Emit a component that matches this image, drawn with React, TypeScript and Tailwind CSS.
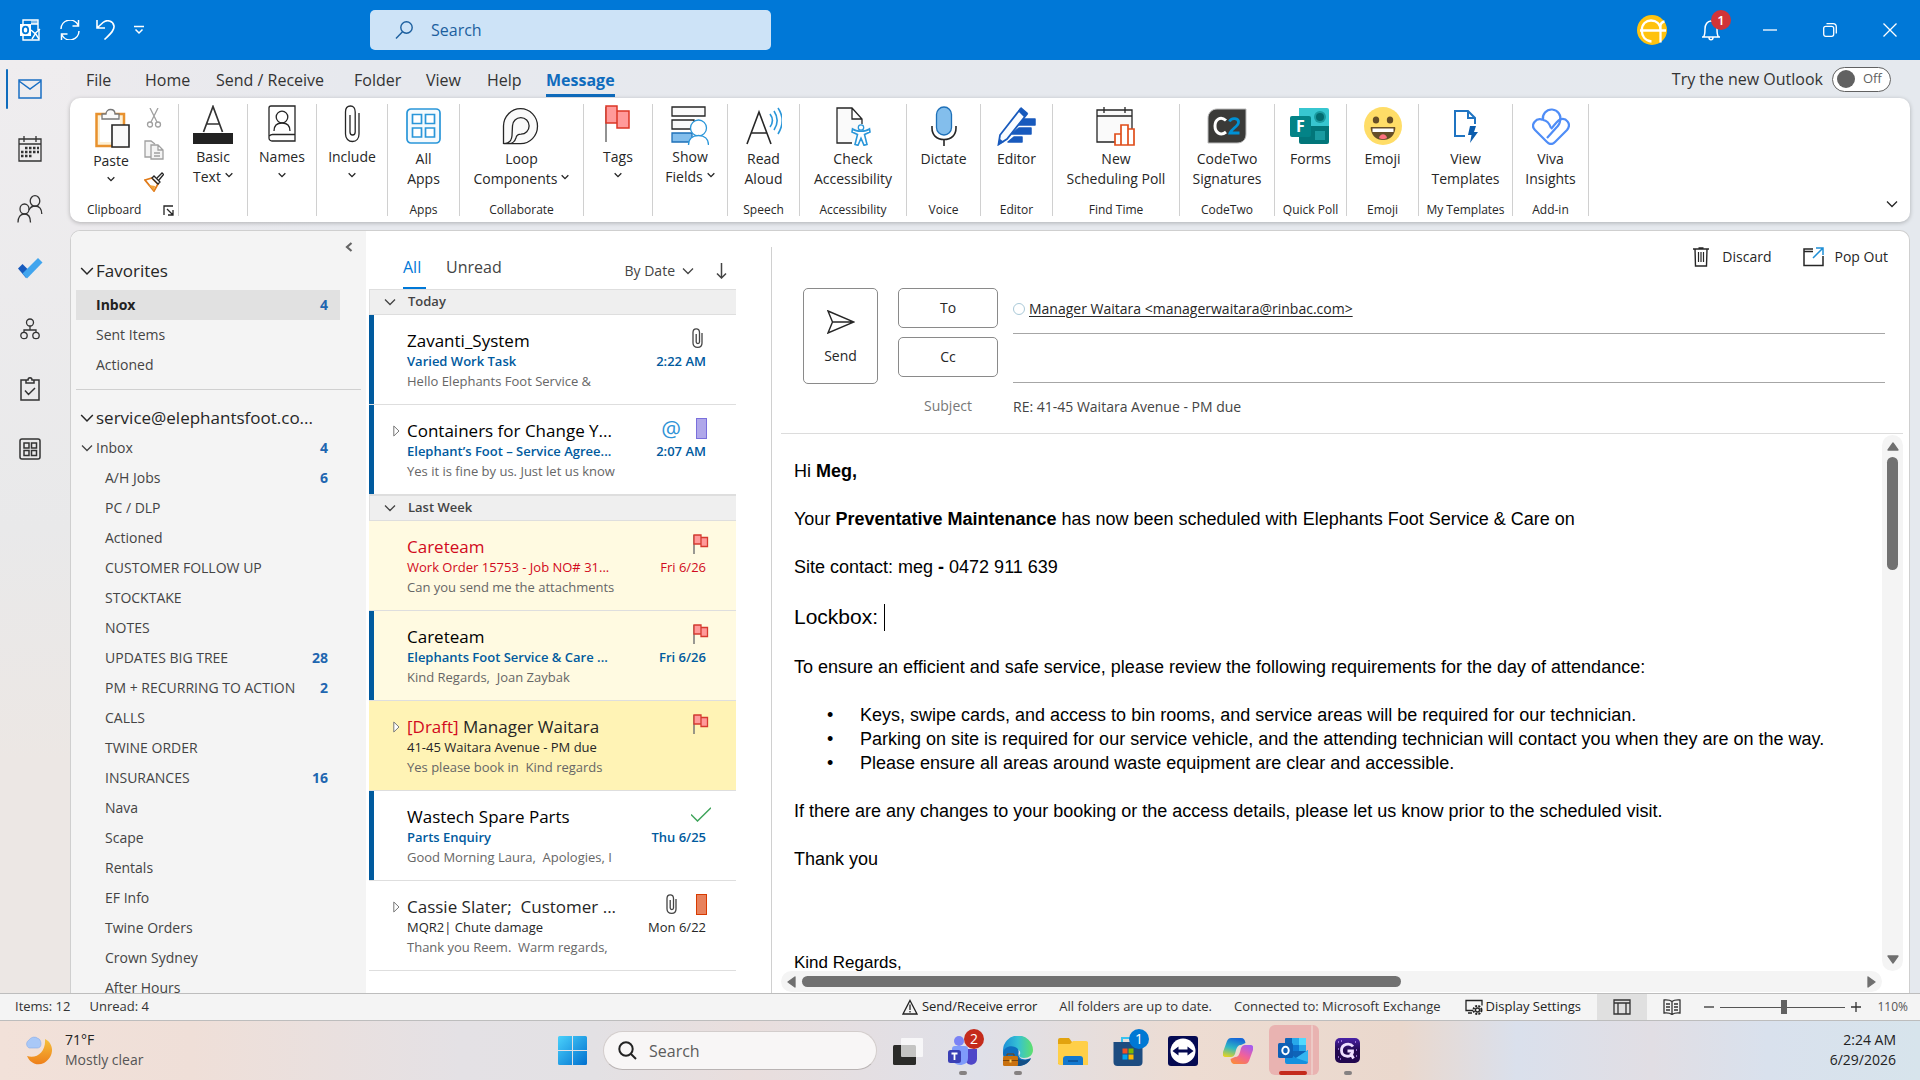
import React from 'react';

type P = { children?: React.ReactNode };

function Svg({ w = 24, h = 24, vb, cls = '', children, sw = 1.3 }: P & { w?: number; h?: number; vb?: string; cls?: string; sw?: number }) {
  return (
    <svg width={w} height={h} viewBox={vb ?? `0 0 ${w} ${h}`} fill="none" stroke="currentColor" strokeWidth={sw} className={'shrink-0 ' + cls} aria-hidden="true">
      {children}
    </svg>
  );
}

const Chevron = ({ s = 8, cls = '' }: { s?: number; cls?: string }) => (
  <Svg w={s} h={s} vb="0 0 12 12" sw={s > 8 ? 1.3 : 2} cls={cls}>
    <path d="M1 3.5l5 5 5-5" />
  </Svg>
);

/* ---------- Title bar ---------- */

function TitleBar() {
  return (
    <header className="flex h-[60px] shrink-0 items-center bg-[#0078d7] text-white">
      <div className="flex w-[370px] shrink-0 items-center pl-[19px]">
        <Svg w={22} h={22} sw={1.4}>
          <path d="M4 5V1h15v10M4 17v4h16V10" />
          <path d="M1 5h11v12H1z" fill="#fff" stroke="none" />
          <ellipse cx="6.500" cy="11" rx="2.700" ry="3.400" stroke="#0078d7" strokeWidth="1.800" />
          <path d="M12 11l4 3.500 5-4.500M13 20l3.500-5.500L20 20M12 5h7" />
          <path d="M12 1.500h7V5h-7z" fill="#fff" fillOpacity=".5" stroke="none" />
        </Svg>
        <button aria-label="Send and receive all" className="ml-[19px]">
          <Svg w={20} h={20} sw={1.5}>
            <path d="M1 9a9 9 0 0 1 17-4M19 11a9 9 0 0 1-17 4M18.500 0v6h-6M1.500 20v-6h6" />
          </Svg>
        </button>
        <button aria-label="Undo" className="ml-4">
          <Svg w={20} h={20} sw={1.6}>
            <path d="M1 0v8h8M1 8l6-5.500C11-1 17 1 18 6c.6 5-5 9-9.500 13.500" />
          </Svg>
        </button>
        <button aria-label="Customize Quick Access Toolbar" className="ml-[18px]">
          <Svg w={10} h={10} sw={1.5}>
            <path d="M0 1.500h10M1.500 4.500L5 8l3.500-3.500" />
          </Svg>
        </button>
      </div>
      <label className="flex h-10 w-[401px] items-center rounded-[5px] bg-[#cde3f7] pl-[25px] text-[#1c5f9e]">
        <Svg w={18} h={18} sw={1.4}>
          <circle cx="11.500" cy="6.500" r="5.700" />
          <path d="M7.500 10.700L1 17.500" />
        </Svg>
        <input type="search" aria-label="Search" placeholder="Search" className="ml-[18px] min-w-0 flex-1 bg-transparent text-base outline-none placeholder:text-[#1c5f9e]" />
      </label>
      <div className="ml-auto flex items-center">
        <button aria-label="Account">
          <svg width="30" height="30" viewBox="0 0 30 30">
            <circle cx="15" cy="15" r="15" fill="#ffc20e" />
            <path d="M3 15.500h26M14.500 26.500C8 26 4.800 21 4.800 15.500 4.800 9 9 5.500 14 5.500s9.500 3 9.500 10v12M23.500 15V11c0-3 1.500-4 4-4.500" fill="none" stroke="#fff" strokeWidth="2.300" />
          </svg>
        </button>
        <button aria-label="Notifications, 1 new" className="relative ml-[34px]">
          <Svg w={20} h={22} sw={1.5}>
            <path d="M1 18h18M2.500 18c1.500-2 1.500-4 1.500-8 0-4.500 2.500-8 6-8s6 3.500 6 8c0 4 0 6 1.500 8M8 18.500c0 3 4 3 4 0" />
          </Svg>
          <span className="absolute -top-[9px] left-[10px] flex h-5 w-5 items-center justify-center rounded-full bg-[#d13438] text-[13px] font-semibold leading-none">1</span>
        </button>
        <div className="flex pl-[19px]">
          <button aria-label="Minimize" className="flex w-[60px] justify-center"><Svg w={14} h={14}><path d="M0 7h14" /></Svg></button>
          <button aria-label="Restore" className="flex w-[60px] justify-center"><Svg w={14} h={14}><rect x="0.700" y="3.300" width="10" height="10" rx="2" /><path d="M3.500.7H10c2 0 3.300 1.300 3.300 3.300v6.500" /></Svg></button>
          <button aria-label="Close" className="flex w-[60px] justify-center"><Svg w={14} h={14}><path d="M.5.5l13 13M13.500.5l-13 13" /></Svg></button>
        </div>
      </div>
    </header>
  );
}

/* ---------- Left rail ---------- */

const rail: { name: string; icon: React.ReactNode }[] = [
  { name: 'Mail', icon: <Svg w={24} h={22} cls="text-[#1a6fc4]" sw={1.5}><path d="M1 2h22v18H1zM1 3l11 8L23 3" /></Svg> },
  {
    name: 'Calendar',
    icon: (
      <Svg w={24} h={28}>
        <path d="M1 4h22v22H1zM1 9h22M6 1v6M18 1v6" />
        <path d="M7 13h2.500M11 13h2.500M15 13h2.500M19 13h2M3 17h2.500M7 17h2.500M11 17h2.500M15 17h2.500M19 17h2M3 21h2.500M7 21h2.500M11 21h2.500" strokeWidth="2.500" />
      </Svg>
    ),
  },
  {
    name: 'People',
    icon: <Svg w={26} h={28}><ellipse cx="7.500" cy="14" rx="4.500" ry="5" /><path d="M1 27.500c0-5.500 2.500-8.500 6.500-8.500s6 3 6 8.500" /><ellipse cx="18" cy="6" rx="4.800" ry="5.300" /><path d="M12 15c1.300-2.700 3.300-4 6-4 4.500 0 6.800 3 6.800 8" /></Svg>,
  },
  {
    name: 'To Do',
    icon: <Svg w={26} h={22}><path d="M1 10.500L5.500 6l8 8-4.500 6z" fill="#185abd" stroke="none" /><path d="M5.500 15.500L21 0l4.500 4.500L10 20.500z" fill="#41a5ee" stroke="none" /></Svg>,
  },
  {
    name: 'Org Explorer',
    icon: <Svg w={20} h={22}><circle cx="10" cy="4.500" r="3.500" /><path d="M10 8v4M4 15v-3h12v3" /><circle cx="4" cy="17.500" r="3.200" /><circle cx="16" cy="17.500" r="3.200" /></Svg>,
  },
  {
    name: 'Tasks',
    icon: <Svg w={20} h={24} sw={1.5}><path d="M6 3H1v20h18V3h-5M6 6V3h2c0-3 4-3 4 0h2v3zM5 13.500l3.500 4L15 11" /></Svg>,
  },
  {
    name: 'More apps',
    icon: <Svg w={22} h={22} sw={1.5}><rect x="1" y="1" width="20" height="20" rx="2" /><path d="M5 5h5v5H5zM12.500 5h5v5h-5zM5 12.500h5v5H5zM12.500 12.500h5v5h-5z" /></Svg>,
  },
];

function Rail() {
  return (
    <nav aria-label="Apps" className="-mt-px flex w-[70px] shrink-0 flex-col text-[#333]">
      {rail.map((r, i) => (
        <button key={r.name} aria-label={r.name} className="flex h-[60px] w-full items-center">
          <span className={i === 0 ? 'ml-1.5 h-10 w-[2px] rounded bg-[#0f6cbd]' : 'ml-1.5 h-10 w-[2px]'} />
          <span className="flex w-[43px] justify-center">{r.icon}</span>
        </button>
      ))}
    </nav>
  );
}

/* ---------- Ribbon ---------- */

const icons: Record<string, React.ReactNode> = {
  basic: <Svg w={40} h={40}><path d="M10.500 27L20 1.500 29.500 27M13.500 19h13" stroke="#333" strokeWidth="1.700" /><path d="M0 28h40v11H0z" fill="#222" stroke="none" /></Svg>,
  names: <Svg w={28} h={38}><path d="M3 1h24v35H4a3 3 0 0 1-3-3V3a2 2 0 0 1 2-2zM1.500 31c1-1.500 2-1.500 3-1.500H27" /><circle cx="14" cy="12" r="5.800" /><path d="M6 26c0-5 3-8 8-8s8 3 8 8" /></Svg>,
  include: <Svg w={16} h={38}><path d="M15 8v21c0 4.500-2.500 7.500-6.500 7.500S1.500 33.500 1.500 29V7c0-3.700 2-6 5-6s4.700 2.300 4.700 6v20c0 2-1 3-2.600 3S6 29 6 27V10" /></Svg>,
  all: <Svg w={36} h={38} cls="text-[#2a96d9]" sw={1.7}><rect x="1" y="2" width="33" height="34" rx="4" fill="#f5fafd" /><path d="M6.500 7.500h9v9h-9zM19.500 7.500h9v9h-9zM6.500 21h9v9h-9zM19.500 21h9v9h-9z" fill="#fff" /></Svg>,
  loop: <Svg w={38} h={38}><path d="M1.500 37V19a17 17.500 0 1 1 17 17.700H1.500c5 0 8-3 8.500-8l.5-10a8.300 8.300 0 1 1 8.500 8.500c-3 0-4.500 1.500-5 3.500-1 3.500-4 6-7 6" fill="#fafafa" /></Svg>,
  tags: <Svg w={28} h={38}><path d="M2 2v35" stroke="#777" strokeWidth="1.600" /><path d="M2 1h11v17H2zM13 6h12v17H13z" fill="#ff9a9a" stroke="#dc3626" strokeWidth="1.500" /></Svg>,
  fields: <Svg w={38} h={40}><path d="M1 2h33v9H1zM1 15h22v9H1z" fill="#fafafa" /><path d="M1 28h20v9H1z" fill="#83beec" stroke="#1e70b8" /><circle cx="27.500" cy="23" r="8" fill="#fff" stroke="#2a96d9" /><path d="M17.500 40c0-6 4-9.500 10-9.500s10 3.500 10 9.500" fill="#fff" stroke="#2a96d9" /></Svg>,
  read: <Svg w={36} h={38}><path d="M1 37L13 5l12 32M5 26h16" strokeWidth="1.600" /><path d="M24 7c3 4 3 9 0 13M28 4c4 6 4 13 0 19M32 1c5.500 8 5.500 17 0 26" stroke="#2a96d9" strokeWidth="1.600" /></Svg>,
  check: <Svg w={36} h={40}><path d="M17 37H2V2h15l10 11v5M17 2v11h10" fill="#fafafa" /><circle cx="26" cy="21.500" r="2.700" stroke="#2a96d9" fill="#fff" /><path d="M17.500 23c4 3 13 3 17 0l.5 3-5.500 2.500 2.500 10-3 .8-3-7-3 7-3-.8 2.500-10-5.500-2.500z" stroke="#2a96d9" fill="#fff" strokeWidth="1.600" /></Svg>,
  dictate: <Svg w={26} h={40}><rect x="5.500" y="1" width="15" height="28" rx="7.500" fill="#83beec" stroke="#1e70b8" /><path d="M1 20v2c0 7 4.500 11.500 12 11.500S25 29 25 22v-2M13 33v7" strokeWidth="1.600" /></Svg>,
  editor: <Svg w={40} h={40}><path d="M24 13h14v6H18zM22 22h12v6H15zM17 31h8v5H11z" fill="#185abd" stroke="#185abd" strokeLinejoin="round" strokeWidth="1.500" /><path d="M23 3.500L3 29 1.500 38.500 10 33 30 8z" fill="#fafcff" stroke="#185abd" strokeWidth="1.800" /><path d="M24 1l7 6-4 4-6-6zM1 39l2-6 4 3z" fill="#185abd" stroke="none" /></Svg>,
  poll: <Svg w={40} h={40}><path d="M1 4h35v32H1zM1 10h35M8 1v6M29 1v6" fill="#fafafa" /><path d="M19 39V28h6v11zM25 39V19h7v20zM32 39V23h6v16z" fill="#fff" stroke="#e04e1b" strokeWidth="1.700" /></Svg>,
  codetwo: (
    <svg width="40" height="38" viewBox="0 0 40 38">
      <path d="M10 2h29v25c0 6-4 9-9 9H1V11c0-5 4-9 9-9z" fill="#3a3a38" stroke="#bbb" />
      <path d="M19 13.500c-5.500-5-11-1-11 5.500s5.500 10.500 11 6" fill="none" stroke="#fff" strokeWidth="3" />
      <path d="M22.500 14.500c2-4.500 9.500-3.500 9 1-.3 4-7 6-8.500 10.500h9.500" fill="none" stroke="#0091d5" strokeWidth="2.800" />
    </svg>
  ),
  forms: (
    <svg width="40" height="38" viewBox="0 0 40 38">
      <path d="M9 1h28a2 2 0 0 1 2 2v16H9z" fill="#37c6d0" />
      <path d="M9 19h30v16a2 2 0 0 1-2 2H11a2 2 0 0 1-2-2z" fill="#02767a" />
      <circle cx="30" cy="10" r="6" fill="#1a9ba1" /><circle cx="30" cy="10" r="4" fill="#036c70" />
      <path d="M25 24h10v9H25z" fill="#1a9ba1" />
      <rect x="0" y="9" width="21" height="21" rx="2" fill="#038387" />
      <text x="6" y="25" fill="#fff" fontSize="16" fontWeight="700" fontFamily="Open Sans, sans-serif">F</text>
    </svg>
  ),
  emoji: (
    <svg width="38" height="38" viewBox="0 0 38 38">
      <circle cx="19" cy="19" r="19" fill="#ffdd67" />
      <ellipse cx="12" cy="13" rx="3.200" ry="3.600" fill="#664e27" /><ellipse cx="26" cy="13" rx="3.200" ry="3.600" fill="#664e27" />
      <path d="M7 20h24c1 0 0 13-12 13S6 20 7 20z" fill="#664e27" />
      <path d="M8.500 21.500h21v3.500h-21z" fill="#fff" /><path d="M15 31c1-5 7-5 8 0-2 1.500-6 1.500-8 0z" fill="#ff717f" />
    </svg>
  ),
  view: <Svg w={26} h={34} cls="text-[#1f74c2]" sw={2}><path d="M12 27H2V2h13l7 7v6M15 2v7h7" /><path d="M17 17h6l-2 6h4l-8 11 1.500-8H15z" fill="#0b5cad" stroke="none" /></Svg>,
  viva: <Svg w={38} h={38} cls="text-[#4f8df7]" sw={2.2}><path d="M11 13a8.800 8.800 0 1 1 17 1c0 3-2 5-4 7l-9 10" /><path d="M11 13c-7-3-13 5-8 10l12 12c2.500 2.500 5.500 2.500 8 0l12-12c5-6-1-13-7-10.500-2 1-3 2-9 9.500" /><path d="M11 13c5 .5 7 5 8 8" /></Svg>,
};

type Cmd = { icon: string; lines: string[]; drop?: 'below' | 'after'; group?: string; w: string };

const cmds: Cmd[] = [
  { icon: 'basic', lines: ['Basic', 'Text'], drop: 'after', w: 'w-[69px]' },
  { icon: 'names', lines: ['Names'], drop: 'below', w: 'w-[69px]' },
  { icon: 'include', lines: ['Include'], drop: 'below', w: 'w-[71px]' },
  { icon: 'all', lines: ['All', 'Apps'], group: 'Apps', w: 'w-[72px]' },
  { icon: 'loop', lines: ['Loop', 'Components'], drop: 'after', group: 'Collaborate', w: 'w-[124px]' },
  { icon: 'tags', lines: ['Tags'], drop: 'below', w: 'w-[69px]' },
  { icon: 'fields', lines: ['Show', 'Fields'], drop: 'after', w: 'w-[75px]' },
  { icon: 'read', lines: ['Read', 'Aloud'], group: 'Speech', w: 'w-[72px]' },
  { icon: 'check', lines: ['Check', 'Accessibility'], group: 'Accessibility', w: 'w-[107px]' },
  { icon: 'dictate', lines: ['Dictate'], group: 'Voice', w: 'w-[74px]' },
  { icon: 'editor', lines: ['Editor'], group: 'Editor', w: 'w-[72px]' },
  { icon: 'poll', lines: ['New', 'Scheduling Poll'], group: 'Find Time', w: 'w-[127px]' },
  { icon: 'codetwo', lines: ['CodeTwo', 'Signatures'], group: 'CodeTwo', w: 'w-[95px]' },
  { icon: 'forms', lines: ['Forms'], group: 'Quick Poll', w: 'w-[72px]' },
  { icon: 'emoji', lines: ['Emoji'], group: 'Emoji', w: 'w-[72px]' },
  { icon: 'view', lines: ['View', 'Templates'], group: 'My Templates', w: 'w-[94px]' },
  { icon: 'viva', lines: ['Viva', 'Insights'], group: 'Add-in', w: 'w-[76px]' },
];

function Clipboard() {
  return (
    <section aria-label="Clipboard" className="flex w-[109px] flex-col border-r border-[#d0d0d0]">
      <div className="flex pl-[22px]">
        <button className="flex w-[38px] flex-col items-center pt-1 text-sm leading-5">
          <Svg w={38} h={40} vb="-3 0 38 40">
            <path d="M1.500 6H29v32H1.500z" fill="#fdf0d5" stroke="#e8912d" strokeWidth="2.500" />
            <path d="M5 9h20v25H5z" fill="#fff" stroke="none" />
            <path d="M7 11V6h4c0-6 9-6 9 0h4v5z" fill="#fafafa" stroke="#777" />
            <path d="M17 17h17v22H17z" fill="#fafafa" strokeWidth="1.600" />
          </Svg>
          <span className="mt-[3px]">Paste</span>
          <Chevron cls="mt-1" />
        </button>
        <div className="flex w-12 flex-col items-center gap-3 pt-1">
          <button aria-label="Cut"><Svg w={16} h={20} cls="text-[#a0a0a0]"><path d="M4 0l7 14M12 0L5 14" /><circle cx="4" cy="16.500" r="2.500" /><circle cx="12" cy="16.500" r="2.500" /></Svg></button>
          <button aria-label="Copy"><Svg w={20} h={20} cls="text-[#a0a0a0]"><path d="M7 17H1V1h6l4 3" fill="#f4f4f4" /><path d="M7 5h7l5 5v9H7zM14 5v5h5M10 13h6M10 16h6" fill="#f4f4f4" /></Svg></button>
          <button aria-label="Format Painter"><Svg w={20} h={20}><path d="M1 8l7-2 6 6-4 7z" fill="#fff" stroke="#e07b1a" strokeWidth="1.800" /><path d="M5 13l6 1-1 5z" fill="#f2a33a" stroke="none" /><path d="M8 6l2-2 6 6-2 2zM13 6l5-5 1.500 1.500L15 8" fill="#fff" /></Svg></button>
        </div>
      </div>
      <div className="mt-auto flex items-center pl-[17px] text-xs leading-3">
        <span>Clipboard</span>
        <button aria-label="Clipboard options" className="mr-1 ml-auto"><Svg w={11} h={11}><path d="M1 10V1h9M4 4l5.500 5.500M10 5v5H5" /></Svg></button>
      </div>
    </section>
  );
}

function Ribbon() {
  return (
    <div className="mr-[10px] flex h-[124px] shrink-0 rounded-[10px] bg-white pt-[6px] pb-[6px] text-[#262626] shadow-[0_1px_4px_rgba(0,0,0,0.25)]">
      <Clipboard />
      {cmds.map((c) => (
        <section key={c.icon} aria-label={c.lines.join(' ')} className={'flex shrink-0 flex-col items-center border-r border-[#d0d0d0] ' + c.w}>
          <button className="flex flex-col items-center whitespace-nowrap text-sm leading-5">
            <span className={c.group ? 'flex h-11 items-center' : 'flex h-[42px] items-start pt-px'}>{icons[c.icon]}</span>
            {c.lines.map((l, i) => (
              <span key={l} className={i === 0 ? 'mt-px flex items-center' : 'flex items-center'}>
                {l}
                {c.drop === 'after' && i === 1 && <Chevron cls="ml-1 -mt-1" />}
              </span>
            ))}
            {c.drop === 'below' && <Chevron cls="mt-1" />}
          </button>
          {c.group && <span className="mt-auto text-xs leading-3 whitespace-nowrap">{c.group}</span>}
        </section>
      ))}
      <button aria-label="Collapse ribbon" className="mt-auto mr-3 mb-1.5 ml-auto"><Chevron s={12} /></button>
    </div>
  );
}

function Tabs() {
  const tabs = [
    { t: 'File', w: 'w-[59px]' },
    { t: 'Home', w: 'w-[71px]' },
    { t: 'Send / Receive', w: 'w-[138px]' },
    { t: 'Folder', w: 'w-[72px]' },
    { t: 'View', w: 'w-[61px]' },
    { t: 'Help', w: 'w-[59px]' },
    { t: 'Message', w: 'w-[80px]' },
  ];
  return (
    <div className="flex h-[38px] shrink-0 items-center pr-[29px] pl-4 text-[#333]">
      {tabs.map((x) => (
        <button key={x.t} className={'mt-1 flex items-start text-left text-base leading-7 whitespace-nowrap ' + x.w}>
          <span className={x.t === 'Message' ? 'border-b-3 border-[#0f6cbd] font-bold text-[#0f6cbd]' : 'border-b-3 border-transparent'}>{x.t}</span>
        </button>
      ))}
      <label className="ml-auto flex items-center gap-[9px] text-base">
        Try the new Outlook
        <input type="checkbox" role="switch" className="sr-only" />
        <span className="flex h-[25px] w-[59px] items-center gap-2 rounded-full border border-[#616161] bg-white pl-1 text-[13px] text-[#616161]">
          <span className="h-[18px] w-[18px] rounded-full bg-[#616161]" />
          Off
        </span>
      </label>
    </div>
  );
}

/* ---------- Folder pane ---------- */

const folders: [string, string][] = [
  ['A/H Jobs', '6'], ['PC / DLP', ''], ['Actioned', ''], ['CUSTOMER FOLLOW UP', ''], ['STOCKTAKE', ''], ['NOTES', ''],
  ['UPDATES BIG TREE', '28'], ['PM + RECURRING TO ACTION', '2'], ['CALLS', ''], ['TWINE ORDER', ''], ['INSURANCES', '16'],
  ['Nava', ''], ['Scape', ''], ['Rentals', ''], ['EF Info', ''], ['Twine Orders', ''], ['Crown Sydney', ''], ['After Hours', ''],
];

function Row({ name, count, sel, indent = 'pl-5', chevron }: { name: string; count?: string; sel?: boolean; indent?: string; chevron?: boolean }) {
  return (
    <button className={'flex h-[30px] w-[264px] shrink-0 items-center pr-3 text-sm whitespace-nowrap ' + indent + (sel ? ' bg-[#e1e1e1] font-bold text-[#222]' : ' text-[#444]')}>
      {chevron && <Chevron s={12} cls="mr-[3px]" />}
      {name}
      <span className="ml-auto font-bold text-[#1f66b0]">{count}</span>
    </button>
  );
}

function FolderPane() {
  return (
    <nav aria-label="Folders" className="flex w-[295px] shrink-0 flex-col overflow-hidden bg-[#f4f4f4] pl-[5px]">
      <button aria-label="Minimize the Folder Pane" className="mt-[11px] mr-[13px] flex h-[10px] justify-end">
        <Svg w={8} h={10} cls="text-[#666]" sw={2.2}><path d="M6.500 1L2 5l4.500 4" /></Svg>
      </button>
      <button className="mt-[4px] flex h-[30px] shrink-0 items-center pl-1 text-[17px] text-[#262626]"><Chevron s={14} cls="mr-0.5" />Favorites</button>
      <div className="h-1 shrink-0" />
      <Row name="Inbox" count="4" sel />
      <Row name="Sent Items" />
      <Row name="Actioned" />
      <hr className="mt-[9px] mr-[5px] shrink-0 border-[#d0d0d0]" />
      <button className="mt-[13px] flex h-[30px] shrink-0 items-center pl-1 text-[17px] text-[#262626]"><Chevron s={14} cls="mr-0.5" />service@elephantsfoot.co...</button>
      <Row name="Inbox" count="4" indent="pl-[5px]" chevron />
      {folders.map(([n, c]) => <Row key={n} name={n} count={c} indent="pl-[29px]" />)}
    </nav>
  );
}

/* ---------- Message list ---------- */

const Flag = () => <Svg w={16} h={20}><path d="M1 1v19" stroke="#777" strokeWidth="1.500" /><path d="M1 1h7v9H1zM8 3.500h6.500v9H8z" fill="#ff9a9a" stroke="#d63a2f" /></Svg>;
const Clip = () => <Svg w={11} h={20} sw={1.3} cls="text-[#444]"><path d="M10 5v10c0 3-1.500 4.300-4.300 4.300S1 18 1 15V4.500C1 2 2.300.8 4.200.8S7.500 2 7.500 4.500V14c0 1-.6 1.500-1.600 1.500S4.200 15 4.200 14V6" /></Svg>;

type Msg = {
  from: React.ReactNode; subject: string; preview: string; time?: string; unread?: boolean; expand?: boolean;
  bg?: string; fromCls?: string; subCls?: string; icon: React.ReactNode; icon2?: React.ReactNode;
};

const UNREAD = 'font-semibold text-[#005a9e]';

const today: Msg[] = [
  { from: 'Zavanti_System', subject: 'Varied Work Task', preview: 'Hello Elephants Foot Service &', time: '2:22 AM', unread: true, icon: <span className="pr-2"><Clip /></span> },
  {
    from: 'Containers for Change Y...', subject: 'Elephant’s Foot – Service Agree...', preview: 'Yes it is fine by us. Just let us know', time: '2:07 AM', unread: true, expand: true,
    icon: <span className="h-[21px] w-[11px] border border-[#7a6fdc] bg-[#b0a8ea]" />,
    icon2: <span className="-mr-1 text-[22px] leading-5 text-[#2f93d6]">@</span>,
  },
];
const lastWeek: Msg[] = [
  { from: 'Careteam', subject: 'Work Order 15753 - Job NO# 31...', preview: 'Can you send me the attachments', time: 'Fri 6/26', bg: 'bg-[#fffae1]', fromCls: 'text-[#d10a20]', subCls: 'text-[#d10a20]', icon: <Flag /> },
  { from: 'Careteam', subject: 'Elephants Foot Service & Care ...', preview: 'Kind Regards,  Joan Zaybak', time: 'Fri 6/26', unread: true, bg: 'bg-[#fffae1]', icon: <Flag /> },
  { from: <><span className="text-[#d10a20]">[Draft]</span> Manager Waitara</>, subject: '41-45 Waitara Avenue - PM due', preview: 'Yes please book in  Kind regards', expand: true, bg: 'bg-[#fff3b5]', fromCls: 'text-[#262626]', subCls: 'text-[#262626]', icon: <Flag /> },
  { from: 'Wastech Spare Parts', subject: 'Parts Enquiry', preview: 'Good Morning Laura,  Apologies, I', time: 'Thu 6/25', unread: true, icon: <Svg w={20} h={15} cls="text-[#3fa45b]" sw={1.5}><path d="M0 7.500l6.500 6.500L20 .8" /></Svg> },
  { from: 'Cassie Slater;  Customer ...', subject: 'MQR2| Chute damage', preview: 'Thank you Reem.  Warm regards,', time: 'Mon 6/22', expand: true, fromCls: 'text-[#262626]', subCls: 'text-[#262626]', icon: <span className="h-[21px] w-[11px] border border-[#d83b01] bg-[#e8825d]" />, icon2: <Clip /> },
];

function Item({ m }: { m: Msg }) {
  const sub = m.unread ? UNREAD : m.subCls;
  return (
    <li className={'flex h-[90px] border-b border-[#dedede] whitespace-pre ' + (m.bg ?? '')}>
      <span className={'w-[5px] shrink-0 ' + (m.unread ? 'bg-[#005a9e]' : '')} />
      <span className="flex w-[33px] shrink-0 justify-center pt-5 pl-3">
        {m.expand && <Svg w={7} h={12} sw={1} cls="text-[#777]"><path d="M.8 1v10L6 6z" fill="#fff" /></Svg>}
      </span>
      <button className="min-w-0 flex-1 self-start pt-[14px] text-left text-[13px] leading-4">
        <span className="flex h-6 items-center">
          <span className={'text-[17px] leading-6 ' + (m.fromCls ?? 'text-black')}>{m.from}</span>
          <span className="mr-[27px] -mt-1.5 ml-auto flex items-center">
            {m.icon2}
            <span className="flex w-8 justify-end"><span className="flex w-4 justify-center">{m.icon}</span></span>
          </span>
        </span>
        <span className={'flex ' + sub}>
          {m.subject}
          <span className="mr-[30px] ml-auto">{m.time}</span>
        </span>
        <span className="mt-1 block text-[#666]">{m.preview}</span>
      </button>
    </li>
  );
}

function GroupHead({ children }: P) {
  return (
    <button className="flex h-[26px] w-full items-center border-y border-l border-[#dedede] bg-[#efefef] pl-[14px] text-[13px] font-semibold text-[#444]">
      <Chevron s={12} cls="mr-3" />{children}
    </button>
  );
}

function MessageList() {
  return (
    <section aria-label="Messages" className="ml-[3px] w-[367px] shrink-0 overflow-hidden">
      <div className="flex h-[58px] items-end pl-[34px] text-[#444]">
        <button className="w-[23px] border-b-2 border-[#0078d7] pb-2 text-left text-base text-[#0078d7]">All</button>
        <button className="ml-5 pb-[10px] text-base">Unread</button>
        <button className="mr-[22px] mb-[8px] ml-auto flex items-center gap-[7px] text-sm">By Date <Chevron s={12} /></button>
        <button aria-label="Sort direction" className="mr-[9px] mb-[10px]"><Svg w={11} h={16} sw={1.5}><path d="M5.500 0v15M1 10.500L5.500 15l4.500-4.500" /></Svg></button>
      </div>
      <GroupHead>Today</GroupHead>
      <ul>{today.map((m, i) => <Item key={i} m={m} />)}</ul>
      <GroupHead>Last Week</GroupHead>
      <ul>{lastWeek.map((m, i) => <Item key={i} m={m} />)}</ul>
    </section>
  );
}

/* ---------- Compose ---------- */

const requirements = [
  'Keys, swipe cards, and access to bin rooms, and service areas will be required for our technician.',
  'Parking on site is required for our service vehicle, and the attending technician will contact you when they are on the way.',
  'Please ensure all areas around waste equipment are clear and accessible.',
];

function Compose() {
  return (
    <main className="mt-4 ml-[35px] flex min-w-0 flex-1 flex-col border-l border-[#d0d0d0] text-[#262626]">
      <div className="flex h-5 justify-end gap-8 pr-[21px] text-sm">
        <button className="flex items-center gap-[13px]">
          <Svg w={16} h={20} sw={1.4}><path d="M0 2h16M5.500 1h5M2 2l.5 17h11L14 2" /><path d="M5.500 5v10M8 5v10M10.500 5v10" strokeWidth="1.200" /></Svg>Discard
        </button>
        <button className="flex items-center gap-[10px]">
          <Svg w={21} h={20} sw={1.5}><path d="M10 2H1v16.500h19V9M1 4.500h9" /><path d="M10 11L20 1M13 1h7v7" stroke="#1f8fd6" /></Svg>Pop Out
        </button>
      </div>
      <div className="mt-[21px] flex h-[145px] shrink-0 pr-[24px] pl-[31px] text-sm">
        <button className="flex h-[96px] w-[75px] flex-col items-center justify-center gap-3 rounded-[5px] border border-[#8a8a8a] pt-1">
          <Svg w={28} h={24} sw={1.4}><path d="M1 1l26 11L1 23l4.500-11zM5.500 12H27" /></Svg>Send
        </button>
        <div className="ml-5 flex w-[100px] flex-col gap-[9px]">
          <button className="h-10 shrink-0 rounded-[5px] border border-[#8a8a8a]">To</button>
          <button className="h-10 shrink-0 rounded-[5px] border border-[#8a8a8a]">Cc</button>
          <label htmlFor="subject" className="text-center leading-10 text-[#777]">Subject</label>
        </div>
        <div className="ml-[15px] flex min-w-0 flex-1 flex-col">
          <div className="flex h-[46px] shrink-0 items-center border-b border-[#a6a6a6] pb-1">
            <span className="h-3 w-3 rounded-full border border-[#a9c9d8]" />
            <a href="mailto:managerwaitara@rinbac.com" className="ml-1 underline underline-offset-2">Manager Waitara &lt;managerwaitara@rinbac.com&gt;</a>
          </div>
          <input aria-label="Cc recipients" className="h-[49px] shrink-0 border-b border-[#a6a6a6] outline-none" />
          <input id="subject" defaultValue="RE: 41-45 Waitara Avenue - PM due" className="mt-[3px] h-10 bg-transparent text-[#444] outline-none" />
        </div>
      </div>
      <div className="mr-1.5 ml-[9px] flex min-h-0 flex-1 flex-col border-t border-[#dcdcdc] pt-px">
        <div className="flex min-h-0 flex-1">
          <div className="min-w-0 flex-1 overflow-hidden pl-[13px] font-['Liberation_Sans',Arial,sans-serif] text-lg leading-6 whitespace-nowrap text-black outline-none" contentEditable suppressContentEditableWarning role="textbox" aria-label="Message body">
            <p className="mt-6">Hi <b>Meg,</b></p>
            <p className="mt-6">Your <b>Preventative Maintenance</b> has now been scheduled with Elephants Foot Service &amp; Care on</p>
            <p className="mt-6">Site contact: meg <b>-</b> 0472 911 639</p>
            <p className="mt-6 flex items-center text-[21px] leading-7">Lockbox:<span className="ml-1.5 h-[27px] w-px bg-black" /></p>
            <p className="mt-6">To ensure an efficient and safe service, please review the following requirements for the day of attendance:</p>
            <ul className="mt-6 pl-[33px]">
              {requirements.map((r) => (
                <li key={r} className="flex"><span className="w-[33px]" aria-hidden="true">•</span>{r}</li>
              ))}
            </ul>
            <p className="mt-6">If there are any changes to your booking or the access details, please let us know prior to the scheduled visit.</p>
            <p className="mt-6">Thank you</p>
            <p className="mt-20 text-[17px]">Kind Regards,</p>
          </div>
          <div className="flex w-[21px] shrink-0 flex-col items-center rounded-full bg-[#f4f4f4] py-[7px] text-[#6f6f6f]">
            <Svg w={12} h={9}><path d="M6 1l5 7H1z" fill="currentColor" strokeLinejoin="round" /></Svg>
            <div className="mt-1.5 h-[113px] w-[11px] rounded-full bg-[#717171]" />
            <Svg w={12} h={9} cls="mt-auto"><path d="M6 8l5-7H1z" fill="currentColor" strokeLinejoin="round" /></Svg>
          </div>
        </div>
        <div className="mr-[21px] mb-px flex h-[21px] shrink-0 items-center rounded-full bg-[#f4f4f4] px-1.5 text-[#6f6f6f]">
          <Svg w={9} h={12}><path d="M1 6l7-5v10z" fill="currentColor" strokeLinejoin="round" /></Svg>
          <div className="ml-1.5 h-[11px] w-[55%] rounded-full bg-[#717171]" />
          <Svg w={9} h={12} cls="ml-auto"><path d="M8 6L1 1v10z" fill="currentColor" strokeLinejoin="round" /></Svg>
        </div>
      </div>
    </main>
  );
}

/* ---------- Status bar and taskbar ---------- */

function StatusBar() {
  return (
    <footer className="flex h-[28px] shrink-0 items-center border-y border-[#bdbdbd] bg-[#f4f4f4] pl-[15px] text-[13px] whitespace-nowrap text-[#333]">
      <span>Items: 12</span>
      <span className="ml-[19px]">Unread: 4</span>
      <button className="ml-auto flex items-center gap-1 text-[#222]">
        <Svg w={16} h={16}><path d="M8 1.500l7 13.500H1zM8 5.500v5.500M8 12v1.500" /></Svg>Send/Receive error
      </button>
      <span className="ml-[22px]">All folders are up to date.</span>
      <span className="ml-[22px]">Connected to: Microsoft Exchange</span>
      <button className="ml-6 flex items-center gap-[3px] text-[#222]">
        <Svg w={18} h={16}><path d="M8 11.500H1V1.500h16v5M3 14h4" /><circle cx="12.500" cy="11" r="2" /><circle cx="12.500" cy="11" r="4" strokeDasharray="2 1.200" strokeWidth="2" /></Svg>Display Settings
      </button>
      <button aria-label="Normal view" className="ml-4 flex h-full w-[50px] items-center justify-center bg-[#e0e0e0]">
        <Svg w={18} h={16}><path d="M1 1h16v14H1zM1 4h16M5 4v11M13 4v11" /></Svg>
      </button>
      <button aria-label="Reading view" className="flex h-full w-[49px] items-center justify-center">
        <Svg w={18} h={16}><path d="M9 2.500C7 .8 4 .8 1 1v13c3-.3 6 0 8 1.500 2-1.500 5-1.800 8-1.500V1c-3-.2-6-.2-8 1.500zM9 2.500v13M3 5h4M3 8h4M3 11h4M11 5h4M11 8h4M11 11h4" /></Svg>
      </button>
      <button aria-label="Zoom out" className="ml-2"><Svg w={10} h={10}><path d="M0 5h10" /></Svg></button>
      <input
        type="range" min={10} max={190} defaultValue={102} aria-label="Zoom"
        className="mx-1.5 h-[14px] w-[125px] appearance-none bg-transparent [&::-webkit-slider-runnable-track]:h-px [&::-webkit-slider-runnable-track]:bg-[#555] [&::-webkit-slider-thumb]:-mt-[7px] [&::-webkit-slider-thumb]:h-[14px] [&::-webkit-slider-thumb]:w-[6px] [&::-webkit-slider-thumb]:appearance-none [&::-webkit-slider-thumb]:bg-[#616161]"
      />
      <button aria-label="Zoom in"><Svg w={10} h={10}><path d="M0 5h10M5 0v10" /></Svg></button>
      <span className="w-[59px] pr-3 text-right text-xs text-[#555]">110%</span>
    </footer>
  );
}

const apps: { name: string; icon: React.ReactNode; badge?: string; badgeCls?: string; run?: boolean; active?: boolean }[] = [
  { name: 'Task View', icon: <svg width="30" height="30" viewBox="0 0 30 30"><rect x="0" y="9" width="23" height="20" rx="1.500" fill="#2b2b29" /><rect x="8" y="2" width="22" height="19" rx="1" fill="#fff" opacity=".72" /></svg> },
  {
    name: 'Teams', badge: '2', badgeCls: 'bg-[#c42b1c]', run: true,
    icon: <svg width="30" height="30" viewBox="0 0 30 30"><circle cx="11" cy="5" r="5" fill="#7b83f5" /><circle cx="23" cy="8" r="3.500" fill="#5059c9" /><path d="M18 13h11v10a6 6 0 0 1-11 3z" fill="#4f46c8" /><path d="M4 13a3 3 0 0 1 3-3h10a3 3 0 0 1 3 3v9c0 5-4 7-8 7s-8-3-8-7z" fill="#7f9bfa" /><rect y="14" width="13" height="13" rx="2.500" fill="#3a3fb5" /><path d="M3.500 17.500h6M6.500 17.500V24" stroke="#fff" strokeWidth="1.800" /></svg>,
  },
  {
    name: 'Edge', run: true,
    icon: <svg width="30" height="30" viewBox="0 0 30 30"><defs><linearGradient id="eg" x1="0" x2="1"><stop offset="0" stopColor="#1b8fd8" /><stop offset=".5" stopColor="#35c1d4" /><stop offset="1" stopColor="#5fe06c" /></linearGradient></defs><path d="M0 15a15 15 0 0 1 30-1c0 5-4 8-9 8-4 0-6-2-4-4 1-2-1-5-5-5C6 12 1 16 0 21z" fill="url(#eg)" /><path d="M0 17c1-6 7-8 12-6 3 1 4 3 3.500 6-.8 6 6 8 12.500 5-3 6-8 8-13 8C6 30 0 24 0 17z" fill="#0f6fbf" /><path d="M15 22c3 3 8 3 13 .5-3 5.500-8 7.500-13 7.500z" fill="#134f86" /><rect y="20" width="15" height="10" rx="1.500" fill="#c9710f" /><path d="M4 20v-2h7v2M0 24.500h15" stroke="#7c4306" fill="none" /><path d="M6.500 23.500h2v3h-2z" fill="#ffd35c" /></svg>,
  },
  { name: 'File Explorer', icon: <svg width="30" height="28" viewBox="0 0 30 28"><path d="M0 3a2 2 0 0 1 2-2h9l3 4h14a2 2 0 0 1 2 2v20H0z" fill="#e2a30f" /><path d="M0 7h12l3-3h13a2 2 0 0 1 2 2v22H2a2 2 0 0 1-2-2z" fill="#ffcf48" /><path d="M5 28v-6a3 3 0 0 1 3-3h14a3 3 0 0 1 3 3v6z" fill="#1378cf" /><path d="M10 24h10" stroke="#0a4f94" strokeWidth="1.500" /></svg> },
  { name: 'Microsoft Store', badge: '1', badgeCls: 'bg-[#0078d4]', icon: <svg width="30" height="30" viewBox="0 0 30 30"><path d="M9 7V2h12v5" fill="none" stroke="#3ac2ee" strokeWidth="2" /><path d="M.500 6h29v20a4 4 0 0 1-4 4h-21a4 4 0 0 1-4-4z" fill="#1d4c80" /><path d="M9.500 12.500h5v5h-5z" fill="#f25022" /><path d="M15.500 12.500h5v5h-5z" fill="#7fba00" /><path d="M9.500 18.500h5v5h-5z" fill="#00a4ef" /><path d="M15.500 18.500h5v5h-5z" fill="#ffb900" /></svg> },
  { name: 'TeamViewer', icon: <svg width="30" height="30" viewBox="0 0 30 30"><rect width="30" height="30" rx="3" fill="#050a52" /><circle cx="15" cy="15" r="12.500" fill="#fff" /><path d="M4.500 15l6-4.500V13.500h9v-3l6 4.500-6 4.500v-3h-9v3z" fill="#050a52" /></svg> },
  {
    name: 'Copilot',
    icon: <svg width="30" height="28" viewBox="0 0 30 28"><defs><linearGradient id="c1" x1=".5" x2=".2" y2="1"><stop offset="0" stopColor="#1668d8" /><stop offset=".5" stopColor="#2fb7c4" /><stop offset="1" stopColor="#e6d321" /></linearGradient><linearGradient id="c2" x1=".8" x2=".2" y2="1"><stop offset="0" stopColor="#a65cf0" /><stop offset=".5" stopColor="#f0619c" /><stop offset="1" stopColor="#fb8a3c" /></linearGradient></defs><path d="M8 1h10c3 0 4 2 4.500 5L18 8c-3 0-4 2-5 5l-1 4c-1 2-2 3-4 3H3c-3 0-4-2-3-5L4 4c1-2 2-3 4-3z" fill="url(#c1)" /><path d="M22 27H12c-3 0-4-2-4.500-5L12 20c3 0 4-2 5-5l1-4c1-2 2-3 4-3h5c3 0 4 2 3 5l-4 11c-1 2-2 3-4 3z" fill="url(#c2)" /></svg>,
  },
  {
    name: 'Outlook', active: true,
    icon: <svg width="30" height="28" viewBox="0 0 30 28"><rect x="7" y="1" width="21" height="20" rx="1" fill="#0f64b8" /><path d="M14 1h7v7h-7z" fill="#28a8ea" /><path d="M21 1h7v7h-7z" fill="#50d9ff" /><path d="M14 8h7v6h-7z" fill="#0f78d4" /><path d="M21 8h7v6h-7z" fill="#28a8ea" /><path d="M7 13l11 8 12-8v12a2 2 0 0 1-2 2H9a2 2 0 0 1-2-2z" fill="#1490df" /><path d="M18 21l12-8v12z" fill="#35b5f1" /><rect y="6" width="15" height="15" rx="1.500" fill="#0f5fb5" /><ellipse cx="7.500" cy="13.500" rx="3.200" ry="3.700" fill="none" stroke="#fff" strokeWidth="2" /></svg>,
  },
  { name: 'G Hub', run: true, icon: <svg width="25" height="25" viewBox="0 0 25 25"><defs><linearGradient id="gh" x2="0" y2="1"><stop offset="0" stopColor="#4a22a8" /><stop offset=".5" stopColor="#22084f" /></linearGradient></defs><rect width="25" height="25" rx="5" fill="url(#gh)" /><path d="M18 8.500c-3-4-11.500-3-11.500 4 0 7 10 7.500 11 2v-1.500h-5M15.500 15l3 5.500" fill="none" stroke="#eedfff" strokeWidth="2.800" /><path d="M3 4h1M6 3h1M20 4h1M3 19h1M5 21h1M21 18h1M21 12h1M3 11h1" stroke="#b58af0" strokeWidth="1.500" /></svg> },
];

function Taskbar() {
  return (
    <div className="relative flex h-[59px] shrink-0 items-center justify-center bg-[linear-gradient(90deg,#f2e1d9_0%,#efdfd8_10%,#e4e1e5_24%,#e3e1e4_31%,#e9dedd_39%,#dfe0e8_51%,#eddcd2_62%,#ead8cd_73%,#dae0ec_79%,#e1dee4_86%,#d9e1ed_92%,#d7e4ec_100%)]">
      <button className="absolute top-0 left-6 flex h-full items-center gap-[11px] text-left text-sm leading-5 text-[#222]">
        <svg width="30" height="30" viewBox="0 0 30 30">
          <defs><linearGradient id="mn" x2="0" y2="1"><stop offset="0" stopColor="#f5c13c" /><stop offset="1" stopColor="#ee7f1a" /></linearGradient></defs>
          <path d="M21 3c10 5 9 18-1 24-7 3.500-14 0-17-7 10 3 19-4 18-17z" fill="url(#mn)" />
          <path d="M5 12a4.500 4.500 0 0 1 0-8 6 6 0 0 1 9-1.500c3 0 5 9.500-.5 9.500z" fill="#a9c8f7" stroke="#86abe8" strokeWidth=".6" />
        </svg>
        <span className="-mt-0.5"><span className="block">71°F</span><span className="block text-[#555]">Mostly clear</span></span>
      </button>
      <div className="flex items-center pl-[13px]">
        <button aria-label="Start">
          <svg width="29" height="29" viewBox="0 0 29 29"><defs><linearGradient id="wn" x2="1" y2="1"><stop offset="0" stopColor="#4ad1fb" /><stop offset="1" stopColor="#0070cf" /></linearGradient></defs><path d="M0 1.500A1.500 1.500 0 0 1 1.500 0H14v14H0zM15 0h12.500A1.500 1.500 0 0 1 29 1.500V14H15zM0 15h14v14H1.500A1.500 1.500 0 0 1 0 27.500zM15 15h14v12.500a1.500 1.500 0 0 1-1.500 1.500H15z" fill="url(#wn)" /></svg>
        </button>
        <label className="ml-4 flex h-[39px] w-[274px] items-center rounded-full border border-[#d3cdcc] border-b-[#b9b3b3] bg-[#f8f6f6] pl-[14px]">
          <Svg w={19} h={19} sw={2} cls="text-[#222]"><circle cx="8" cy="8" r="6.700" /><path d="M13 13l5 5" /></Svg>
          <input type="search" aria-label="Search Windows" placeholder="Search" className="ml-3 min-w-0 flex-1 bg-transparent text-base outline-none placeholder:text-[#5c5c5c]" />
        </label>
        <div className="ml-[3px] flex">
          {apps.map((a) => (
            <button key={a.name} aria-label={a.name} className="relative flex h-[59px] w-[55px] items-center justify-center">
              {a.active && <span className="absolute top-1 right-px left-1 h-[50px] rounded-md bg-[#e9b3b1]"><span className="absolute right-1.5 h-full w-0.5 rounded bg-[#edcac6]" /></span>}
              <span className="relative">{a.icon}</span>
              {a.badge && <span className={'absolute top-2 right-1.5 flex h-5 w-5 items-center justify-center rounded-full text-sm leading-none text-white ' + a.badgeCls}>{a.badge}</span>}
              {(a.run || a.active) && <span className={'absolute bottom-[5px] rounded-full ' + (a.active ? 'h-1 w-7 bg-[#c42b1c]' : 'h-1 w-2 bg-[#858181]')} />}
            </button>
          ))}
        </div>
      </div>
      <div className="absolute top-0 right-6 flex h-full flex-col justify-center pb-0.5 text-right text-sm leading-5 text-[#222]">
        <span>2:24 AM</span>
        <span>6/29/2026</span>
      </div>
    </div>
  );
}

export default function App() {
  return (
    <div className="flex h-screen flex-col overflow-hidden bg-[#ece8e8] font-['Open_Sans','Noto_Sans',sans-serif]">
      <TitleBar />
      <div className="flex min-h-0 flex-1 bg-[linear-gradient(180deg,#efedef_0%,#e9e9ea_50%,#ece7e4_75%)]">
        <Rail />
        <div className="flex min-w-0 flex-1 flex-col bg-[linear-gradient(90deg,#eceaed_0%,#e7e9ee_15%,#e5e9ee_100%)]">
          <Tabs />
          <Ribbon />
          <div className="mt-2 mr-[10px] flex min-h-0 flex-1 overflow-hidden rounded-t-[10px] border border-b-0 border-[#cfcfcf] bg-white">
            <FolderPane />
            <MessageList />
            <Compose />
          </div>
        </div>
      </div>
      <StatusBar />
      <Taskbar />
    </div>
  );
}
